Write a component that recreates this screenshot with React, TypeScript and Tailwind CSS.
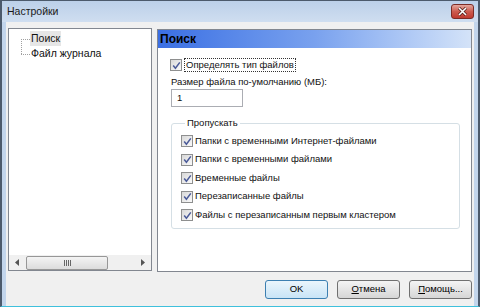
import React from "react";

function Check() {
  return (
    <span className="w-[12px] h-[12px] border border-[#8e8f8f] bg-linear-to-br from-[#d8d8d8] to-[#fafafa] flex items-center justify-center shrink-0">
      <svg width="9" height="9" viewBox="0 0 9 9">
        <path d="M1.2 4.6 L3.4 7.2 L7.8 1.4" stroke="#4a5a98" strokeWidth="1.5" fill="none" />
      </svg>
    </span>
  );
}

function Btn({ children, primary }: { children: React.ReactNode; primary?: boolean }) {
  return (
    <button
      className={
        primary
          ? "w-[63px] h-[19px] rounded-[3px] border border-[#3c7fb1] bg-linear-to-b from-[#eaf5fc] to-[#c9e4f6] text-[9.5px] text-black"
          : "w-[63px] h-[19px] rounded-[3px] border border-[#707070] bg-linear-to-b from-[#f4f4f4] to-[#d6d6d6] text-[9.5px] text-black"
      }
    >
      {children}
    </button>
  );
}

const skips = [
  "Папки с временными Интернет-файлами",
  "Папки с временными файлами",
  "Временные файлы",
  "Перезаписанные файлы",
  "Файлы с перезаписанным первым кластером",
];

export default function App() {
  return (
    <div className="w-[480px] h-[307px] flex flex-col bg-[#c2d5ec] border-l-2 border-t border-r-2 border-[#4c5a6c] border-b border-b-[#3fc0dc] overflow-hidden font-['Liberation_Sans',Arial,sans-serif] text-[10.5px] text-[#111]">
      {/* title bar */}
      <div className="h-[21px] flex items-center pl-[5px] pr-[4px] bg-linear-to-b from-[#bcd0e9] to-[#cfdef0]">
        <span className="text-[10.5px] text-[#1a1a1a]">Настройки</span>
        <div className="ml-auto w-[23px] h-[15px] rounded-[3px] border border-[#7c2c26] bg-linear-to-b from-[#e3a79e] via-[#cc5b4f] to-[#c0392f] flex items-center justify-center">
          <svg width="11" height="9" viewBox="0 0 11 9">
            <path d="M2 1 L9 8 M9 1 L2 8" stroke="#4a1a16" strokeWidth="3" />
            <path d="M2 1 L9 8 M9 1 L2 8" stroke="#fff" strokeWidth="1.6" />
          </svg>
        </div>
      </div>

      {/* client */}
      <div className="flex-1 mx-[4px] bg-[#f0f0f0] flex flex-col pt-[6px] px-[2px]">
        <div className="h-[244px] flex gap-[5px]">
          {/* tree */}
          <div className="w-[144px] mb-[1px] bg-white border border-[#828790] flex flex-col">
            <div className="pl-[12px] pt-[2px] flex">
              <div className="w-[9px] flex flex-col pt-[8px]">
                <div className="h-[15px] border-l border-t border-dotted border-[#a0a0a0]" />
                <div className="border-t border-dotted border-[#a0a0a0]" />
              </div>
              <div className="flex flex-col">
                <span className="h-[15px] px-[1px] bg-[#e6e6e6] leading-[15px] w-fit">Поиск</span>
                <span className="h-[15px] px-[1px] leading-[15px]">Файл журнала</span>
              </div>
            </div>
            <div className="mt-auto h-[15px] bg-[#f0f0f0] flex items-center">
              <div className="w-[16px] flex justify-center">
                <svg width="4" height="7" viewBox="0 0 4 7"><path d="M4 0 L0 3.5 L4 7 Z" fill="#555" /></svg>
              </div>
              <div className="ml-[1px] w-[82px] h-[14px] rounded-[2px] border border-[#979797] bg-linear-to-b from-[#f4f4f4] to-[#dcdcdc] flex items-center justify-center gap-[1px]">
                <span className="w-[1px] h-[6px] bg-[#666]" />
                <span className="w-[1px] h-[6px] bg-[#666]" />
                <span className="w-[1px] h-[6px] bg-[#666]" />
                <span className="w-[1px] h-[6px] bg-[#666]" />
              </div>
              <div className="ml-auto w-[16px] flex justify-center">
                <svg width="4" height="7" viewBox="0 0 4 7"><path d="M0 0 L4 3.5 L0 7 Z" fill="#555" /></svg>
              </div>
            </div>
          </div>

          {/* right panel */}
          <div className="flex-1 mt-[1px] bg-white border border-[#828790] flex flex-col">
            <div className="h-[18px] flex items-center pl-[2px] bg-linear-to-r from-[#3b6fe3] via-[#79a1ee] to-[#d4e3f8]">
              <span className="text-[12px] font-bold text-black">Поиск</span>
            </div>
            <div className="pl-[12px] pt-[10px] flex flex-col text-[9.5px]">
              <div className="h-[14px] flex items-center gap-[2px]">
                <Check />
                <span className="px-[1px] border border-dotted border-[#333] leading-[12px]">Определять тип файлов</span>
              </div>
              <span className="mt-[3px] h-[14px] leading-[14px] pl-[1px]">Размер файла по-умолчанию (МБ):</span>
              <div className="ml-[1px] w-[72px] h-[18px] border border-[#abadb3] flex items-center pl-[5px]">1</div>
              <fieldset className="mt-[9px] ml-[1px] w-[289px] border border-[#d5dfe5] rounded-[3px] pl-[9px] pb-[6px]">
                <legend className="ml-[4px] px-[2px] leading-[14px]">Пропускать</legend>
                <div className="pt-[4px] flex flex-col gap-[4.5px]">
                  {skips.map((s) => (
                    <div key={s} className="h-[14px] flex items-center gap-[2px]">
                      <Check />
                      <span>{s}</span>
                    </div>
                  ))}
                </div>
              </fieldset>
            </div>
          </div>
        </div>

        {/* buttons */}
        <div className="mt-[8px] flex justify-end gap-[9px]">
          <Btn primary>OK</Btn>
          <Btn>
            <span className="underline">О</span>тмена
          </Btn>
          <Btn>
            <span className="underline">П</span>омощь...
          </Btn>
        </div>
      </div>
    </div>
  );
}
